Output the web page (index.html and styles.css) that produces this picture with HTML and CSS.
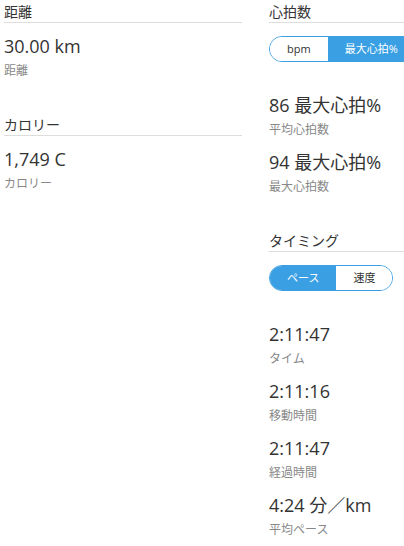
FILE: index.html
```html
<!DOCTYPE html>
<html lang="ja">
<head>
    <meta charset="UTF-8">
    <meta name="viewport" content="width=device-width, initial-scale=1.0">
    <title>アクティビティ統計</title>
    <link rel="stylesheet" href="styles.css">
</head>
<body>
    <div class="page">
        <div class="col">
            <section class="group">
                <h2 class="group-title">距離</h2>
                <div class="stat">
                    <div class="stat-value">30.00 km</div>
                    <div class="stat-label">距離</div>
                </div>
            </section>
            <section class="group">
                <h2 class="group-title">カロリー</h2>
                <div class="stat">
                    <div class="stat-value">1,749 C</div>
                    <div class="stat-label">カロリー</div>
                </div>
            </section>
        </div>
        <div class="col">
            <section class="group">
                <h2 class="group-title">心拍数</h2>
                <div class="toggle">
                    <span class="toggle-item">bpm</span>
                    <span class="toggle-item active">最大心拍%</span>
                </div>
                <div class="stat">
                    <div class="stat-value">86 最大心拍%</div>
                    <div class="stat-label">平均心拍数</div>
                </div>
                <div class="stat">
                    <div class="stat-value">94 最大心拍%</div>
                    <div class="stat-label">最大心拍数</div>
                </div>
            </section>
            <section class="group">
                <h2 class="group-title">タイミング</h2>
                <div class="toggle">
                    <span class="toggle-item active">ペース</span>
                    <span class="toggle-item">速度</span>
                </div>
                <div class="stat">
                    <div class="stat-value">2:11:47</div>
                    <div class="stat-label">タイム</div>
                </div>
                <div class="stat">
                    <div class="stat-value">2:11:16</div>
                    <div class="stat-label">移動時間</div>
                </div>
                <div class="stat">
                    <div class="stat-value">2:11:47</div>
                    <div class="stat-label">経過時間</div>
                </div>
                <div class="stat">
                    <div class="stat-value">4:24 分／km</div>
                    <div class="stat-label">平均ペース</div>
                </div>
            </section>
        </div>
    </div>
</body>
</html>
```

FILE: styles.css
```css
*{
    margin: 0;
    padding: 0;
    box-sizing: border-box;
}
html,body{
    background: #fff;
    overflow: hidden;
}
body{
    font-family: "Open Sans", "Noto Sans CJK JP", sans-serif;
    color: #333;
}
.page{
    display: grid;
    grid-template-columns: 238px 238px;
    column-gap: 27px;
    padding-left: 4px;
    width: 404px;
    overflow: hidden;
}
/* last stat margin collapses into this one */
.group{
    margin-bottom: 34px;
}
.group-title{
    font-size: 14px;
    font-weight: normal;
    line-height: 20px;
    padding-top: 2px;
    border-bottom: 1px solid #ddd;
    margin-bottom: 11px;
    color: #333;
}
.toggle{
    display: inline-flex;
    height: 26px;
    margin-top: 2px;
    margin-bottom: 31px;
    border: 1px solid #3a9fe3;
    border-radius: 13px;
    overflow: hidden;
    white-space: nowrap;
}
.toggle-item{
    padding: 0 17px;
    font-size: 11px;
    line-height: 24px;
    color: #333;
    background: #fff;
}
.toggle-item.active{
    background: #3a9fe3;
    color: #fff;
}
.stat{
    margin-bottom: 12px;
}
.stat-value{
    font-size: 18px;
    line-height: 24px;
    color: #333;
    white-space: nowrap;
}
.stat-label{
    margin-top: 5px;
    font-size: 12px;
    line-height: 16px;
    color: #888;
}
```
